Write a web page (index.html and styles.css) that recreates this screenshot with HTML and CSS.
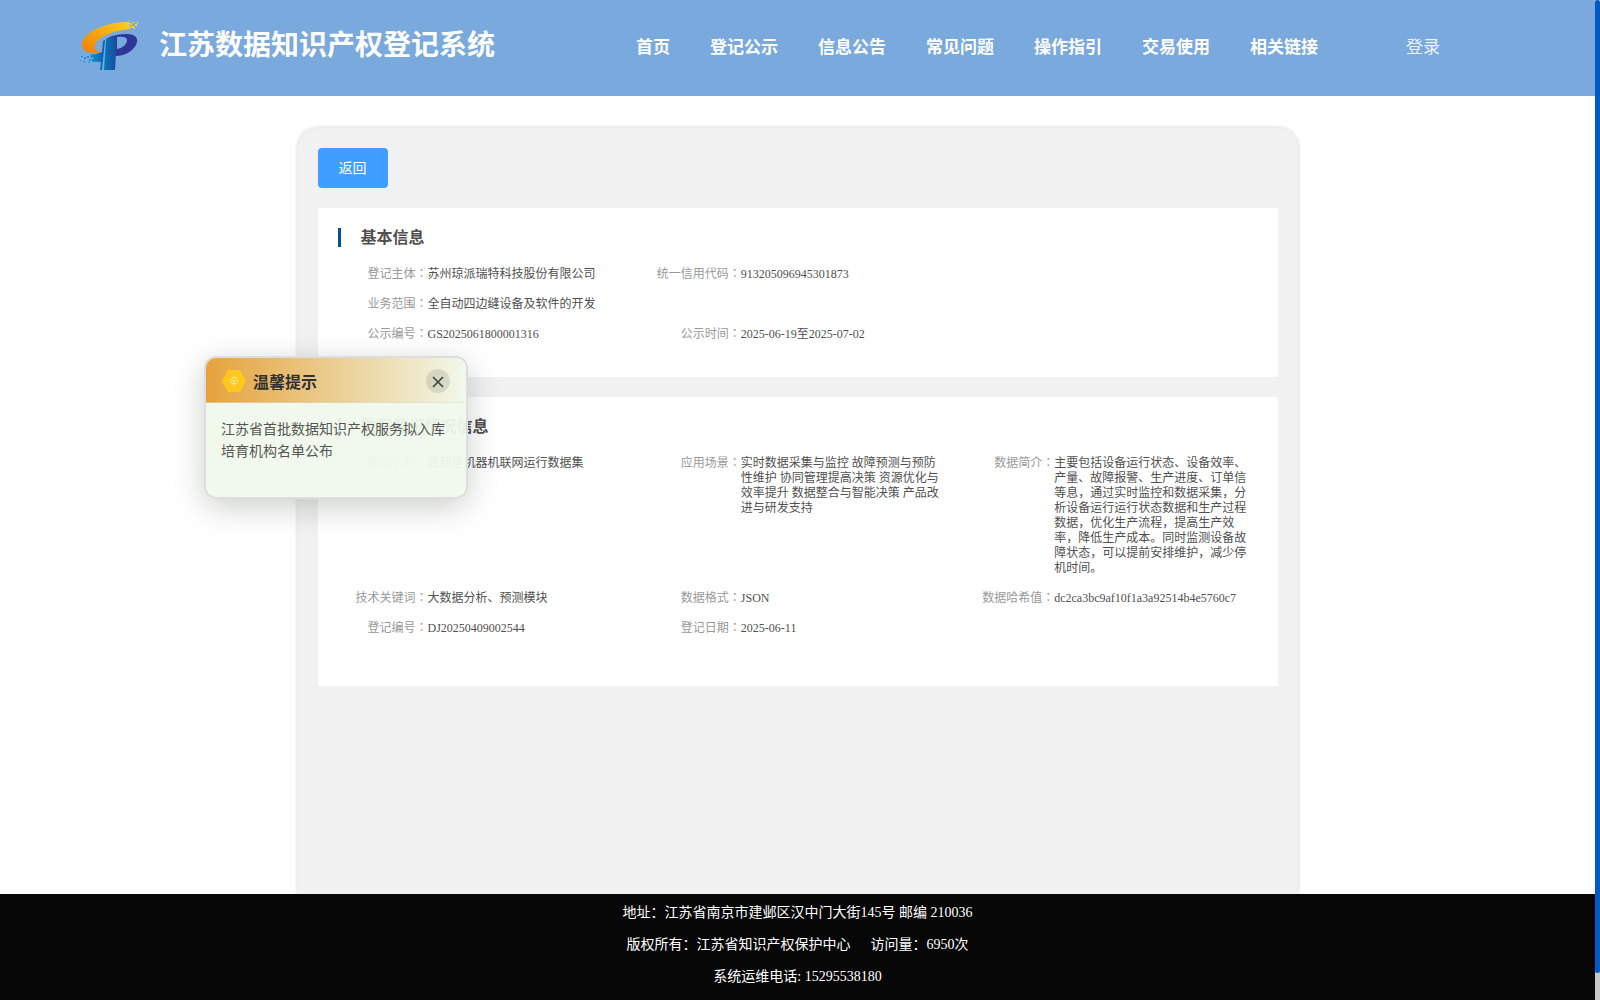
FILE: index.html
```html
<!DOCTYPE html>
<html lang="zh-CN">
<head>
    <meta charset="UTF-8">
    <meta name="viewport" content="width=device-width, initial-scale=1.0">
    <title>江苏数据知识产权登记系统</title>
    <link rel="stylesheet" href="styles.css">
</head>
<body>
    <div class="page">
        <!-- 顶部导航 -->
        <header class="header">
            <svg class="logo" viewBox="0 0 60 52">
                <defs>
                    <linearGradient id="orange" x1="0" y1="1" x2="1" y2="0">
                        <stop offset="0" stop-color="#f07c05"/>
                        <stop offset="1" stop-color="#fdd21c"/>
                    </linearGradient>
                    <linearGradient id="blue" x1="0" y1="0" x2="1" y2="0">
                        <stop offset="0" stop-color="#0577bd"/>
                        <stop offset="1" stop-color="#1b4a9c"/>
                    </linearGradient>
                    <linearGradient id="sky" x1="0" y1="0" x2="1" y2="0">
                        <stop offset="0" stop-color="#12a0e0"/>
                        <stop offset="1" stop-color="#085fa8"/>
                    </linearGradient>
                </defs>
                <path fill="url(#orange)" d="M44 2C26 3 4 12 2 23c-1 8 6 11 17 10l2-1c-6-1-8-5-5-9 4-7 17-12 33-14l3-2-3-2 1-2-4-1z"/>
                <path fill="#ffd91c" d="M47 2h2v2h-2zM50 3h2v2h-2zM53 2h2v1h-2zM52 6h2v2h-2zM55 4h2v2h-2zM57 2h1v2h-1zM49 1h1v1h-1zM54 8h1v1h-1z"/>
                <path fill="#2e3796" fill-rule="evenodd" d="M26 19c6-4 15-5 21-5 7 0 11 3 10 8-2 8-11 14-22 14l-1-18zM37 17v12c6-1 10-5 10-9 0-3-4-4-10-3z"/>
                <path fill="url(#blue)" d="M26 19l11-3-2 34H24z"/>
                <path fill="url(#sky)" d="M23 21l2-1-3 30h-2l1-8c-5-1-6 1-10-2l3-2-4-1 1-2-4-1c5 1 10 0 15-2z"/>
                <path fill="#1593d8" d="M1 36h2v1H1zM4 37h2v2H4zM7 36h2v2H7zM9 39h2v2H9zM8 42h2v1H8zM3 41h2v1H3zM12 41h2v1h-2zM0 40h1v1H0z"/>
            </svg>
            <h1 class="site-name">江苏数据知识产权登记系统</h1>
            <nav class="nav">
                <a>首页</a>
                <a>登记公示</a>
                <a>信息公告</a>
                <a>常见问题</a>
                <a>操作指引</a>
                <a>交易使用</a>
                <a>相关链接</a>
            </nav>
            <a class="login">登录</a>
        </header>

        <!-- 详情 -->
        <main class="panel">
            <button class="back">返回</button>

            <section class="card">
                <h2 class="card-title">基本信息</h2>
                <div class="grid">
                    <div class="item"><span class="label">登记主体<i lang="zh-TW">：</i></span><span class="value">苏州琼派瑞特科技股份有限公司</span></div>
                    <div class="item wide"><span class="label">统一信用代码<i lang="zh-TW">：</i></span><span class="value">913205096945301873</span></div>
                    <div class="item full"><span class="label">业务范围<i lang="zh-TW">：</i></span><span class="value">全自动四边缝设备及软件的开发</span></div>
                    <div class="item"><span class="label">公示编号<i lang="zh-TW">：</i></span><span class="value">GS2025061800001316</span></div>
                    <div class="item"><span class="label">公示时间<i lang="zh-TW">：</i></span><span class="value">2025-06-19至2025-07-02</span></div>
                </div>
            </section>

            <section class="card card-data">
                <h2 class="card-title">数据登记情况信息</h2>
                <div class="grid">
                    <div class="item"><span class="label">数据名称<i lang="zh-TW">：</i></span><span class="value">腹部垫机器机联网运行数据集</span></div>
                    <div class="item"><span class="label">应用场景<i lang="zh-TW">：</i></span><span class="value">实时数据采集与监控 故障预测与预防性维护 协同管理提高决策 资源优化与效率提升 数据整合与智能决策 产品改进与研发支持</span></div>
                    <div class="item"><span class="label">数据简介<i lang="zh-TW">：</i></span><span class="value">主要包括设备运行状态、设备效率、产量、故障报警、生产进度、订单信等息，通过实时监控和数据采集，分析设备运行运行状态数据和生产过程数据，优化生产流程，提高生产效率，降低生产成本。同时监测设备故障状态，可以提前安排维护，减少停机时间。</span></div>
                    <div class="item"><span class="label">技术关键词<i lang="zh-TW">：</i></span><span class="value">大数据分析、预测模块</span></div>
                    <div class="item"><span class="label">数据格式<i lang="zh-TW">：</i></span><span class="value">JSON</span></div>
                    <div class="item"><span class="label">数据哈希值<i lang="zh-TW">：</i></span><span class="value">dc2ca3bc9af10f1a3a92514b4e5760c7</span></div>
                    <div class="item"><span class="label">登记编号<i lang="zh-TW">：</i></span><span class="value">DJ20250409002544</span></div>
                    <div class="item"><span class="label">登记日期<i lang="zh-TW">：</i></span><span class="value">2025-06-11</span></div>
                </div>
            </section>
        </main>

        <!-- 页脚 -->
        <footer class="footer">
            <p>地址：江苏省南京市建邺区汉中门大街145号 邮编 210036</p>
            <p>版权所有：江苏省知识产权保护中心<span class="visits">访问量：6950次</span></p>
            <p>系统运维电话: 15295538180</p>
        </footer>
    </div>

    <!-- 滚动条 -->
    <div class="scrollbar"><div class="thumb"></div></div>

    <!-- 浮动提示 -->
    <div class="notice">
        <div class="notice-head">
            <svg class="notice-icon" viewBox="0 0 24 24">
                <path fill="#ffc81a" d="M6 1h12l6 11-6 11H6L0 12z"/>
                <g fill="none" stroke="#fff0b8">
                    <path d="M10.5 14.500C7 12.500 8 8.500 12 8.500s5 4 1.500 6z"/>
                    <path d="M12 14v-3M10.500 10.500L12 12l1.500-1.500M10.500 16h3"/>
                </g>
            </svg>
            <span class="notice-title">温馨提示</span>
            <span class="close">
                <svg viewBox="0 0 12 12"><path d="M1 1l10 10M11 1L1 11" stroke="#444" stroke-width="1.700"/></svg>
            </span>
        </div>
        <div class="notice-body">江苏省首批数据知识产权服务拟入库培育机构名单公布</div>
    </div>
</body>
</html>
```
FILE: styles.css
```css
* {
    box-sizing: border-box;
}
body {
    margin: 0;
    height: 1000px;
    overflow: hidden;
    display: flex;
    background: #fff;
    font-family: "Liberation Serif", "Noto Sans CJK SC", serif;
}
.page {
    width: 1595px;
    height: 1000px;
    display: flex;
    flex-direction: column;
    align-items: center;
}
.header {
    width: 100%;
    height: 96px;
    flex: none;
    padding-left: 80px;
    display: flex;
    align-items: center;
    background: #79a9dd;
    color: #fff;
}
.logo {
    width: 60px;
    height: 52px;
    margin-bottom: 4px;
}
.site-name {
    width: 477px;
    margin: 0 0 4px 19px;
    font-size: 28px;
    line-height: 40px;
    white-space: nowrap;
}
.nav {
    display: flex;
    gap: 40px;
    font-size: 17px;
    font-weight: bold;
    line-height: 24px;
}
.login {
    margin-left: 88px;
    font-size: 17px;
    line-height: 24px;
    opacity: 0.85;
}
.panel {
    width: 1000px;
    height: 766px;
    flex: none;
    margin-top: 32px;
    padding: 20px;
    background: #f1f1f1;
    border-radius: 20px 20px 0 0;
    box-shadow: 0 0 4px rgba(0, 0, 0, 0.2);
}
.back {
    display: block;
    width: 70px;
    height: 40px;
    padding: 0 0 2px;
    border: none;
    border-radius: 4px;
    background: #409eff;
    color: #fff;
    font-family: inherit;
    font-size: 14px;
}
.card {
    height: 169px;
    margin-top: 20px;
    padding: 20px 0 0 20px;
    background: #fff;
}
.card-data {
    height: 289px;
}
.card-title {
    margin: 0;
    height: 19px;
    padding-left: 20px;
    border-left: 3px solid #005293;
    font-size: 16px;
    line-height: 20px;
    color: #505050;
}
.grid {
    display: grid;
    grid-template-columns: repeat(3, 1fr);
    row-gap: 15px;
    margin-top: 20px;
    font-size: 12px;
    line-height: 15px;
}
.item {
    display: flex;
}
.wide {
    grid-column: span 2;
}
.full {
    grid-column: span 3;
}
.label {
    width: 90px;
    flex: none;
    text-align: right;
    color: #999;
}
.label i {
    font-family: "Noto Sans CJK TC", sans-serif;
    font-style: normal;
    line-height: 0;
}
.value {
    width: 200px;
    color: #505050;
}
.footer {
    width: 100%;
    height: 106px;
    padding-top: 3px;
    background: #070707;
    color: #fff;
    font-size: 14px;
    line-height: 32px;
    text-align: center;
}
.footer p {
    margin: 0;
}
.visits {
    margin-left: 20px;
}
.scrollbar {
    width: 5px;
    height: 1000px;
    background: #c8c8c8;
}
.thumb {
    height: 973px;
    background: #0059c4;
    border-radius: 3px;
}
.notice {
    position: absolute;
    left: 204px;
    top: 356px;
    width: 264px;
    height: 143px;
    overflow: hidden;
    border: 2px solid #dcdddc;
    border-radius: 12px;
    background: rgba(240, 249, 235, 0.95);
    box-shadow: 0 8px 32px rgba(0, 0, 0, 0.2);
}
.notice-head {
    height: 45px;
    padding: 2px 16px 0 16px;
    display: flex;
    align-items: center;
    background: linear-gradient(90deg, #e6a23c, #f0f9eb);
    border-bottom: 1px solid rgba(220, 220, 210, 0.5);
}
.notice-icon {
    width: 24px;
    height: 24px;
    margin-right: 7px;
}
.notice-title {
    flex: 1;
    font-size: 16px;
    font-weight: bold;
    color: #303133;
}
.close {
    width: 24px;
    height: 24px;
    display: flex;
    align-items: center;
    justify-content: center;
    border-radius: 50%;
    background: rgba(0, 0, 0, 0.1);
}
.close svg {
    width: 12px;
    height: 12px;
    margin-top: 2px;
}
.notice-body {
    padding: 16px 15px;
    font-size: 14px;
    line-height: 22px;
    color: #555;
}
```
